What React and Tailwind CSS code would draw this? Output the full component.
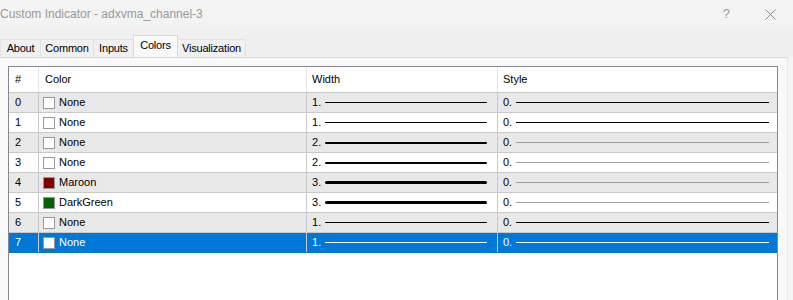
// App.jsx
// MT-style "Custom Indicator" dialog, Colors tab with the buffer list
import React from 'react';

const rows = [
  { i: 0, color: null, name: 'None', w: 1, wLine: '#000', sLine: '#000' },
  { i: 1, color: null, name: 'None', w: 1, wLine: '#000', sLine: '#000' },
  { i: 2, color: null, name: 'None', w: 2, wLine: '#000', sLine: '#a0a0a0' },
  { i: 3, color: null, name: 'None', w: 2, wLine: '#000', sLine: '#a0a0a0' },
  { i: 4, color: '#800000', name: 'Maroon', w: 3, wLine: '#000', sLine: '#a0a0a0' },
  { i: 5, color: '#006400', name: 'DarkGreen', w: 3, wLine: '#000', sLine: '#a0a0a0' },
  { i: 6, color: null, name: 'None', w: 1, wLine: '#000', sLine: '#000' },
  { i: 7, color: null, name: 'None', w: 1, wLine: '#fff', sLine: '#fff', selected: true },
];

const tabs = [
  { label: 'About', w: 'w-[41px]' },
  { label: 'Common', w: 'w-[54px]' },
  { label: 'Inputs', w: 'w-[41px]' },
  { label: 'Colors', w: 'w-[45px]', active: true },
  { label: 'Visualization', w: 'w-[69px]' },
];

function Row({ r, striped }) {
  const bg = r.selected ? 'bg-[#0078d7] text-white' : striped ? 'bg-[#e8e8e8] text-black' : 'bg-white text-black';
  const grid = r.selected ? 'border-[#0078d7]' : 'border-[#c9c9c9]';
  return (
    <div className={`flex h-[20px] border-b ${grid} ${bg}`}>
      <div className="w-[30px] border-r border-[#c9c9c9] pl-[6px] flex items-center">{r.i}</div>
      <div className="w-[268px] border-r border-[#c9c9c9] pl-[4px] flex items-center gap-[4px]">
        <span
          className="w-[12px] h-[12px] border border-[#999] box-border"
          style={{ background: r.color || '#fff' }}
        />
        <span>{r.name}</span>
      </div>
      <div className="w-[191px] border-r border-[#c9c9c9] pl-[5px] pr-[10px] flex items-center gap-[4px]">
        <span className="w-[9px]">{r.w}.</span>
        <span className="flex-1 rounded-full" style={{ height: r.w, background: r.wLine }} />
      </div>
      <div className="w-[279px] pl-[5px] pr-[8px] flex items-center gap-[4px]">
        <span className="w-[9px]">0.</span>
        <span className="flex-1 h-px" style={{ background: r.sLine }} />
      </div>
    </div>
  );
}

export default function App() {
  return (
    <div className="w-[793px] h-[300px] bg-[#f0f0f0] overflow-hidden flex flex-col font-['Liberation_Sans',Arial,sans-serif] text-[11px]">

      {/* ── Title bar ── */}
      <div className="h-[28px] flex-shrink-0 flex items-center bg-[#f3f3f3]">
        <span className="text-[12px] text-[#9a9a9a]">Custom Indicator - adxvma_channel-3</span>
        <span className="ml-auto mr-[35px] text-[13px] text-[#9a9a9a]">?</span>
        <svg width="11" height="11" viewBox="0 0 11 11" className="mr-[17px]">
          <path d="M0.5 0.5 L10.5 10.5 M10.5 0.5 L0.5 10.5" stroke="#8a8a8a" strokeWidth="1" />
        </svg>
      </div>

      {/* ── Tabs ── */}
      <div className="h-[29px] flex-shrink-0 flex items-end tracking-[-0.2px]">
        {tabs.map(t => (
          <div
            key={t.label}
            className={`${t.w} flex items-center justify-center border border-b-0 -mr-px ${
              t.active
                ? 'h-[22px] bg-[#f9f9f9] border-[#d9d9d9] relative z-10 pb-[3px]'
                : 'h-[18px] bg-[#f0f0f0] border-[#e3e3e3]'
            }`}
          >
            {t.label}
          </div>
        ))}
      </div>

      {/* ── Panel ── */}
      <div className="flex-1 flex min-h-0">
        <div className="w-[787px] bg-[#f9f9f9] border-t border-[#d9d9d9] pl-[8px] pt-[8px]">
          <div className="w-[770px] h-[300px] border border-[#828790] bg-white">
            {/* header */}
            <div className="flex h-[26px] border-b border-[#c9c9c9] text-black">
              <div className="w-[30px] border-r border-[#e5e5e5] pl-[6px] flex items-center">#</div>
              <div className="w-[268px] border-r border-[#e5e5e5] pl-[6px] flex items-center">Color</div>
              <div className="w-[191px] border-r border-[#e5e5e5] pl-[5px] flex items-center">Width</div>
              <div className="w-[279px] pl-[5px] flex items-center">Style</div>
            </div>
            {rows.map((r, idx) => (
              <Row key={r.i} r={r} striped={idx % 2 === 0} />
            ))}
          </div>
        </div>
        <div className="flex-1 bg-[#f5f5f5] border-l border-[#e8e8e8]" />
      </div>
    </div>
  );
}
